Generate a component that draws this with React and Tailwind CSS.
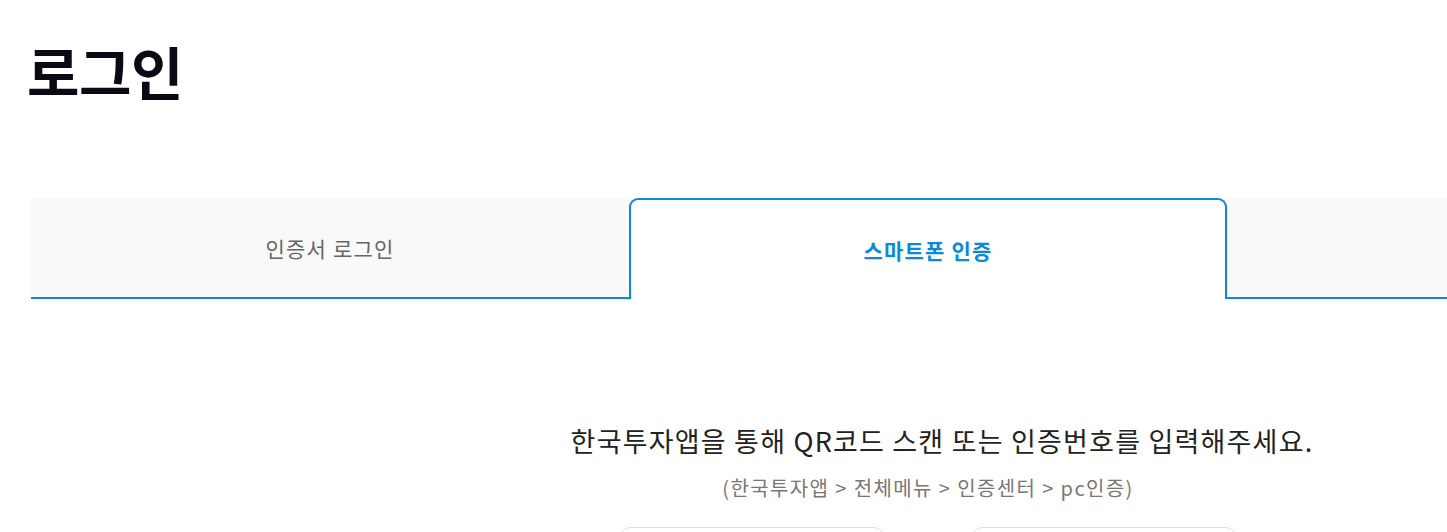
import React from 'react';

const tabs = [
  { id: 'cert', label: '인증서 로그인' },
  { id: 'phone', label: '스마트폰 인증' },
  { id: 'empty', label: '' },
];

export default function App() {
  const active = 'phone';

  return (
    <div className="w-[1447px] h-[532px] overflow-hidden bg-white font-['Noto_Sans_CJK_KR','Noto_Sans',sans-serif]">
      {/* Title */}
      <h1 className="pl-[27px] pt-[30px] text-[57px] font-bold leading-[80px] text-[#0a0a14] tracking-[-0.5px]">로그인</h1>

      {/* Tabs */}
      <div className="ml-[31px] mt-[88px] w-[1794px] flex h-[101px]">
        {tabs.map(t => (
          t.id === active ? (
            <div key={t.id} className="w-[598px] h-full bg-white border-[2.5px] border-b-0 border-[#0a8ad8] rounded-t-[9px] flex items-center justify-center pt-[2px] text-[21px] font-bold text-[#0a8ad8] tracking-[1.2px]">
              {t.label}
            </div>
          ) : (
            <div key={t.id} className="w-[598px] h-full bg-[#f9f9f9] border-b-2 border-[#0a8ad8] flex items-center justify-center pt-[2px] text-[21px] text-[#666666] tracking-[1.2px]">
              {t.label}
            </div>
          )
        ))}
      </div>

      {/* Content */}
      <div className="ml-[31px] w-[1794px] flex flex-col items-center">
        <p className="mt-[124px] text-[27px] leading-[36px] text-[#222222] tracking-[1.2px] pl-[28px]">한국투자앱을 통해 QR코드 스캔 또는 인증번호를 입력해주세요.</p>
        <p className="mt-[15px] text-[20px] leading-[28px] text-[#777777] tracking-[1.4px]">(한국투자앱 &gt; 전체메뉴 &gt; 인증센터 &gt; pc인증)</p>
        <div className="mt-[25px] flex gap-[86px]">
          <div className="w-[266px] h-[120px] border border-[#dddddd] rounded-[12px]" />
          <div className="w-[266px] h-[120px] border border-[#dddddd] rounded-[12px]" />
        </div>
      </div>
    </div>
  );
}
